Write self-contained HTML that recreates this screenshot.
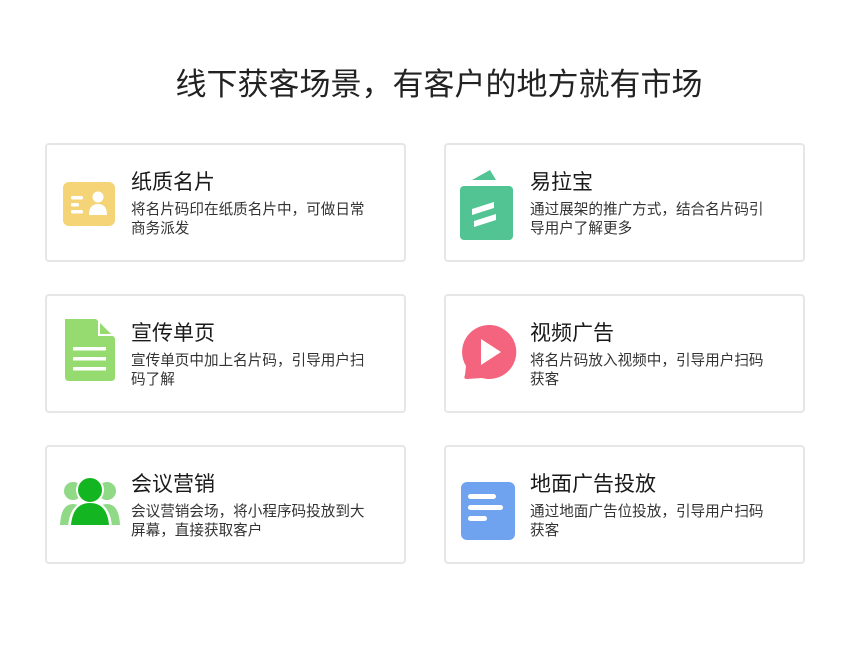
<!DOCTYPE html>
<html><head><meta charset="utf-8"><style>
body{margin:0;width:860px;height:648px;background:#fff;font-family:"Liberation Sans","Noto Sans CJK SC",sans-serif;color:#222;position:relative;overflow:hidden}
h1{position:absolute;top:59px;left:9px;width:860px;text-align:center;font-size:31px;font-weight:normal;margin:0;color:#222}
.c{position:absolute;width:357px;height:115px;border:2px solid #e6e6e6;border-radius:4px;box-sizing:content-box}
.c svg{position:absolute;left:13px;top:21px}
.t{position:absolute;left:84px;top:21px;font-size:21px;color:#1a1a1a}
.d{position:absolute;left:84px;top:56px;width:238px;font-size:14.6px;line-height:19px;color:#333}
</style></head><body>
<h1>线下获客场景，有客户的地方就有市场</h1>

<div class="c" style="left:45px;top:143px">
<svg width="60" height="70" viewBox="0 0 60 70"><rect x="3" y="16" width="52" height="44" rx="6" fill="#f4d477"/><rect x="11" y="30" width="12" height="3.5" rx="1.5" fill="#fff"/><rect x="11" y="37" width="8" height="3.5" rx="1.5" fill="#fff"/><rect x="11" y="44" width="12" height="3.5" rx="1.5" fill="#fff"/><circle cx="38" cy="31" r="5.5" fill="#fff"/><path d="M29 49 Q29 38 38 38 Q47 38 47 49 Z" fill="#fff"/></svg>
<div class="t">纸质名片</div><div class="d">将名片码印在纸质名片中，可做日常商务派发</div></div>

<div class="c" style="left:444px;top:143px">
<svg width="60" height="80" viewBox="0 0 60 80"><path d="M13 14 L31 4 L37 14 Z" fill="#52c493"/><rect x="1" y="20" width="53" height="54" rx="4" fill="#52c493"/><path d="M13 43 L35 36 L35 42 L13 49Z M15 55 L37 48 L37 54 L15 61Z" fill="#fff"/></svg>
<div class="t">易拉宝</div><div class="d">通过展架的推广方式，结合名片码引导用户了解更多</div></div>

<div class="c" style="left:45px;top:294px">
<svg width="60" height="70" viewBox="0 0 60 70"><path d="M5 2 H36 L55 21 V60 Q55 64 51 64 H9 Q5 64 5 60Z" fill="#95db6f"/><path d="M38 4 L53 19 H38Z" fill="#fff"/><path d="M40 6 L51 17 H40Z" fill="#95db6f"/><rect x="13" y="30" width="33" height="3.5" fill="#fff"/><rect x="13" y="40" width="33" height="3.5" fill="#fff"/><rect x="13" y="50" width="33" height="3.5" fill="#fff"/></svg>
<div class="t">宣传单页</div><div class="d">宣传单页中加上名片码，引导用户扫码了解</div></div>

<div class="c" style="left:444px;top:294px">
<svg width="60" height="70" viewBox="0 0 60 70"><path d="M30 8 A27 27 0 1 1 23 61 L8 62 Q4 62 6 58 L7 49 A27 27 0 0 1 30 8Z" fill="#f4647e"/><path d="M22 22 L42 35 L22 48Z" fill="#fff"/></svg>
<div class="t">视频广告</div><div class="d">将名片码放入视频中，引导用户扫码获客</div></div>

<div class="c" style="left:45px;top:445px">
<svg width="62" height="70" viewBox="0 0 62 70"><circle cx="13" cy="23" r="9" fill="#8fd987"/><path d="M0 57 Q1 36 13 36 Q26 36 28 57Z" fill="#8fd987"/><circle cx="47" cy="23" r="9" fill="#8fd987"/><path d="M32 57 Q34 36 47 36 Q59 36 60 57Z" fill="#8fd987"/><circle cx="30" cy="22" r="14" fill="#fff"/><path d="M8 59 Q10 33 30 33 Q50 33 52 59Z" fill="#fff"/><circle cx="30" cy="22" r="12" fill="#13b520"/><path d="M11 57 Q13 35 30 35 Q47 35 49 57Z" fill="#13b520"/></svg>
<div class="t">会议营销</div><div class="d">会议营销会场，将小程序码投放到大屏幕，直接获取客户</div></div>

<div class="c" style="left:444px;top:445px">
<svg width="60" height="80" viewBox="0 0 60 80"><rect x="2" y="14" width="54" height="58" rx="6" fill="#6fa2ef"/><rect x="9" y="26" width="28" height="5" rx="2.5" fill="#fff"/><rect x="9" y="37" width="35" height="5" rx="2.5" fill="#fff"/><rect x="9" y="48" width="19" height="5" rx="2.5" fill="#fff"/></svg>
<div class="t">地面广告投放</div><div class="d">通过地面广告位投放，引导用户扫码获客</div></div>
</body></html>
